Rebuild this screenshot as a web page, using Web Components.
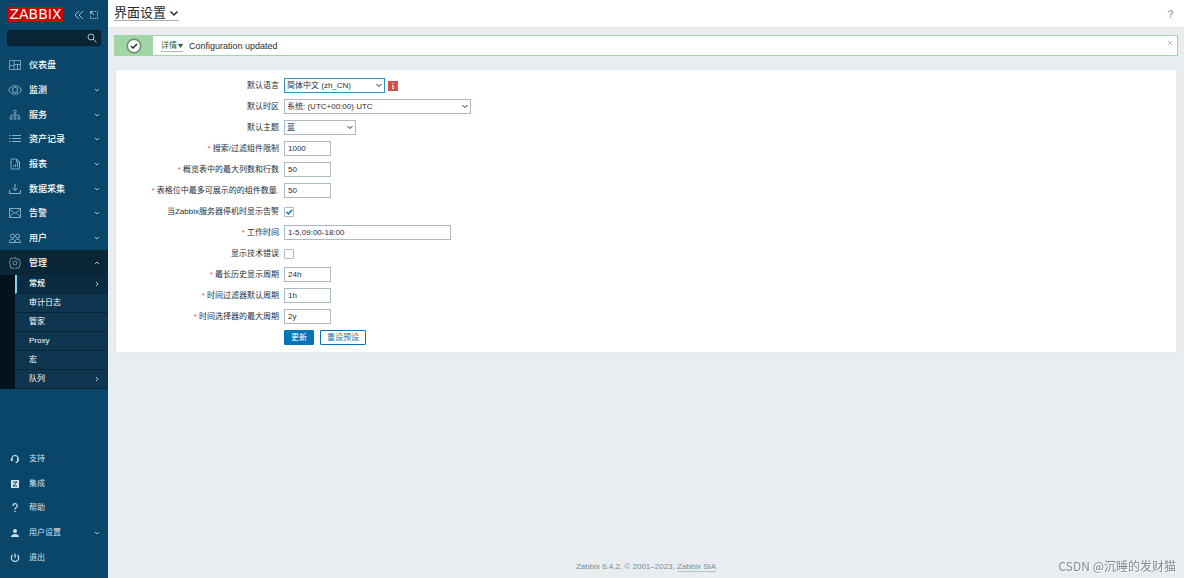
<!DOCTYPE html>
<html lang="zh-CN">
<head>
<meta charset="utf-8">
<title>界面设置</title>
<style>
  body { margin: 0; font: 8px/12px "Liberation Sans", "Noto Sans CJK SC", sans-serif; color: #1f2c33; background: #e9edf0; }
</style>
</head>
<body>
<zbx-app>
  <zbx-sidebar slot="side"></zbx-sidebar>
  <zbx-header slot="main" heading="界面设置"></zbx-header>
  <zbx-message slot="main">Configuration updated</zbx-message>
  <zbx-form slot="main">
    <zbx-select label="默认语言" value="简体中文 (zh_CN)" size="language" info active></zbx-select>
    <zbx-select label="默认时区" value="系统: (UTC+00:00) UTC" size="zone"></zbx-select>
    <zbx-select label="默认主题" value="蓝" size="theme"></zbx-select>
    <zbx-input label="搜索/过滤组件限制" value="1000" required></zbx-input>
    <zbx-input label="概览表中的最大列数和行数" value="50" required></zbx-input>
    <zbx-input label="表格位中最多可展示的的组件数量." value="50" required></zbx-input>
    <zbx-check label="当Zabbix服务器停机时显示告警" checked></zbx-check>
    <zbx-input label="工作时间" value="1-5,09:00-18:00" required wide></zbx-input>
    <zbx-check label="显示技术错误"></zbx-check>
    <zbx-input label="最长历史显示周期" value="24h" required></zbx-input>
    <zbx-input label="时间过滤器默认周期" value="1h" required></zbx-input>
    <zbx-input label="时间选择器的最大周期" value="2y" required></zbx-input>
    <zbx-actions></zbx-actions>
  </zbx-form>
  <zbx-footer slot="main"></zbx-footer>
</zbx-app>
<zbx-watermark>CSDN @沉睡的发财猫</zbx-watermark>

<script>
const svg = (body, w = 12, h = 12, box = `0 0 ${w} ${h}`) =>
  `<svg width="${w}" height="${h}" viewBox="${box}" fill="none" stroke="currentColor" aria-hidden="true">${body}</svg>`;

const define = (name, render) => customElements.define(name, class extends HTMLElement {
  connectedCallback() {
    if (this.shadowRoot) return;
    const t = document.createElement('template');
    t.innerHTML = '<style>:host,*{box-sizing:border-box}svg{display:block;flex:none}</style>' + render(this);
    this.attachShadow({ mode: 'open' }).append(t.content.cloneNode(true));
  }
});

const icons = {
  dashboard: svg('<path d="M.5 1.500h11v9H.5zM5 1.500v9M.5 6.500H5M5 5.500h6.500M8.500 5.500v5" stroke-width=".8"/>'),
  eye: svg('<path d="M.5 6C3.500.2 10.500.2 13.500 6 10.500 11.800 3.500 11.800.500 6z" stroke-width=".9"/><circle cx="7" cy="6" r="2.700" stroke-width=".9"/>', 14, 12),
  services: svg('<path d="M6 4v4M2 8V6h8v2" stroke-width=".8"/><circle cx="6" cy="2.500" r="1.300" stroke-width=".8"/><circle cx="2" cy="9.300" r="1.200" stroke-width=".8"/><circle cx="6" cy="9.300" r="1.200" stroke-width=".8"/><circle cx="10" cy="9.300" r="1.200" stroke-width=".8"/>'),
  list: svg('<path d="M3 2.500h9M3 5.500h9M3 8.500h9M0 2.500h1.500M0 5.500h1.500M0 8.500h1.500"/>'),
  report: svg('<path d="M2 1h5.500L10.500 4v7H2zM7.500 1v3h3M4.500 7.500V9M6.500 6V9M8.500 5V9" stroke-width=".9"/>'),
  download: svg('<path d="M6 1v6.500M3.500 5 6 7.500 8.500 5M.5 7v3.500h11V7"/>'),
  mail: svg('<path d="M.5 1.500h11v9H.5zM.5 2 6 6.500 11.500 2M.5 10l4-4M11.500 10l-4-4" stroke-width=".9"/>'),
  users: svg('<g stroke-width=".9"><circle cx="3.500" cy="4" r="2"/><circle cx="8.500" cy="4" r="2"/><path d="M.5 10.500v-1c0-3 5.500-3 5.500 0v1zM6 10.500v-1c0-3 5.500-3 5.500 0v1z"/></g>'),
  gear: svg('<path d="M5 .8h2l.4 1.300 1.100.5 1.300-.6 1.200 1.300-.6 1.300.4 1 .9.4v1.500l-1.200.6-.4 1 .5 1.200-1.300 1-1.200-.5-1 .4-.6 1H5l-.6-1.200-1-.4-1.300.5L1 9l.5-1.200-.4-1-.8-.5V4.800l1-.5.4-1L1.200 2l1.200-1 1.200.600 1-.4z" stroke-width=".8"/><circle cx="6" cy="6" r="2" stroke-width=".8"/>'),
  support: svg('<path d="M3 8V5.500a3 3 0 0 1 6 0V7q0 2.500-2.500 2.500" stroke-width="1.200"/><path d="M2.500 5.500V8M9 5.500V8" stroke-width="1.500"/>'),
  integrations: svg('<path fill="currentColor" stroke="none" d="M2 2h8v8H2z"/><path d="M4 4h4L4 8h4" stroke="#0a466a"/>'),
  help: svg('<path d="M4 4c0-3 4.200-3 4.200-.4C8.200 5.400 6 5.500 6 7.500M6 8.700V10" stroke-width="1.200"/>'),
  user: svg('<g fill="currentColor" stroke="none"><circle cx="6" cy="4" r="2"/><path d="M2 10c0-4 8-4 8 0z"/></g>'),
  power: svg('<path d="M6 1.500V6M3.500 3a3.700 3.700 0 1 0 5 0" stroke-width="1.200"/>')
};
const chevron = d => svg(`<path d="${{ down: 'M1 2l2 2 2-2', up: 'M1 4l2-2 2 2', right: 'M2 1l2 2-2 2' }[d]}"/>`, 6, 6);

define('zbx-app', () => `<style>
  :host{display:flex;min-height:100vh}
  main{flex:1;min-width:0;display:flex;flex-direction:column}
  </style><slot name="side"></slot><main><slot name="main"></slot></main>`);

define('zbx-nav-item', el => `<style>
  :host{display:block;font-size:9px;color:#fff;font-weight:500}
  :host([minor]){font-size:8px;color:#d5e2ea;font-weight:400}
  a{height:100%;display:flex;align-items:center;color:inherit;text-decoration:none;padding:0 8px 0 7px}
  :host([open]) a{background:#0a2536}
  i{width:15px;margin-right:7px;display:flex;justify-content:center;color:#8fb4ca}
  :host([minor]) i{color:#d5e2ea}
  span{flex:1}
  .c{color:#a9c4d4}
  </style><a href="#"><i>${icons[el.getAttribute('icon')]}</i><span><slot></slot></span>
  ${el.hasAttribute('arrow') ? `<div class="c">${chevron(el.getAttribute('arrow'))}</div>` : ''}</a>`);

define('zbx-sub-item', el => `<style>
  :host{display:block;height:19px}
  a{height:100%;display:flex;align-items:center;color:#fff;text-decoration:none;padding:0 8px 0 12px;background:#0e3650;border-bottom:1px solid #082437;border-left:2px solid #0e3650}
  :host([selected]) a{background:#0a2c42;border-left-color:#86d0f5;font-weight:500}
  span{flex:1}
  div{color:#a9c4d4}
  </style><a href="#"><span><slot></slot></span>${el.hasAttribute('arrow') ? `<div>${chevron('right')}</div>` : ''}</a>`);

define('zbx-sidebar', () => `<style>
  :host{width:108px;flex:none;background:#0a466a;display:flex;flex-direction:column;padding-bottom:8px}
  .top{display:flex;align-items:center;height:29px;padding-left:8px;color:#9dbdd0}
  .logo{background:#d40000;color:#fff;font:14px/15px "DejaVu Sans",sans-serif;width:55px;text-align:center;text-decoration:none;margin-right:11px}
  button{border:0;background:none;padding:0;color:inherit;margin-right:5px}
  .search{display:flex;align-items:center;height:16px;margin:1px 7px 7px;background:#082436;border:1px solid #082032;border-radius:2px;color:#a9c4d4}
  .search button{margin-right:3px}
  input{flex:1;min-width:0;border:0;background:none;color:#fff;font:inherit;padding:0 4px;height:12px;outline:0}
  .main{display:grid;grid-auto-rows:1fr;height:222px}
  .sub{background:#03131e;padding-left:15px}
  .foot{display:grid;grid-auto-rows:1fr;height:123px;margin-top:auto}
  </style>
  <div class="top"><a class="logo" href="#">ZABBIX</a>
    <button aria-label="折叠">${svg('<path d="M5 1 1 5l4 4M9 1 5 5l4 4"/>', 10, 10)}</button>
    <button aria-label="隐藏">${svg('<path d="M5.500 1.500h3v7h-7V5.500" stroke-width=".9" stroke-dasharray="1.500 .7"/><path d="M1.500 4.500v-3h3M1.500 1.500 5 5"/>', 10, 10)}</button></div>
  <div class="search"><input aria-label="搜索"><button aria-label="搜索">${svg('<circle cx="4" cy="4" r="3"/><path d="m6 6 3.500 3.500"/>', 10, 10)}</button></div>
  <nav class="main">
    <zbx-nav-item icon="dashboard">仪表盘</zbx-nav-item>
    <zbx-nav-item icon="eye" arrow="down">监测</zbx-nav-item>
    <zbx-nav-item icon="services" arrow="down">服务</zbx-nav-item>
    <zbx-nav-item icon="list" arrow="down">资产记录</zbx-nav-item>
    <zbx-nav-item icon="report" arrow="down">报表</zbx-nav-item>
    <zbx-nav-item icon="download" arrow="down">数据采集</zbx-nav-item>
    <zbx-nav-item icon="mail" arrow="down">告警</zbx-nav-item>
    <zbx-nav-item icon="users" arrow="down">用户</zbx-nav-item>
    <zbx-nav-item icon="gear" arrow="up" open>管理</zbx-nav-item>
  </nav>
  <nav class="sub">
    <zbx-sub-item selected arrow>常规</zbx-sub-item>
    <zbx-sub-item>审计日志</zbx-sub-item>
    <zbx-sub-item>管家</zbx-sub-item>
    <zbx-sub-item>Proxy</zbx-sub-item>
    <zbx-sub-item>宏</zbx-sub-item>
    <zbx-sub-item arrow>队列</zbx-sub-item>
  </nav>
  <nav class="foot">
    <zbx-nav-item minor icon="support">支持</zbx-nav-item>
    <zbx-nav-item minor icon="integrations">集成</zbx-nav-item>
    <zbx-nav-item minor icon="help">帮助</zbx-nav-item>
    <zbx-nav-item minor icon="user" arrow="down">用户设置</zbx-nav-item>
    <zbx-nav-item minor icon="power">退出</zbx-nav-item>
  </nav>`);

define('zbx-header', el => `<style>
  :host{display:flex;align-items:center;justify-content:space-between;height:28px;background:#fff;border-bottom:1px solid #dfe4e7;padding:0 10px 0 6px}
  h1{margin:0;font-size:13px;line-height:14px;font-weight:400}
  h1 button{display:flex;align-items:center;gap:3px;font:inherit;color:inherit;border:0;border-bottom:1px solid #a5abaf;background:none;padding:0}
  a{color:#a9b8c2;font-size:11px;font-weight:700;text-decoration:none}
  </style><h1><button>${el.getAttribute('heading')}${svg('<path d="M1.500 3.500 5 7l3.500-3.500" stroke-width="1.500"/>', 10, 10)}</button></h1><a href="#" aria-label="帮助">?</a>`);

define('zbx-message', () => `<style>
  :host{display:flex;align-items:center;height:21px;margin:7px 6px 0;background:#fff;border:1px solid #a3d6a6;font-size:9px}
  .ok{width:38px;align-self:stretch;background:#a3d6a6;display:flex;align-items:center;justify-content:center}
  .d{display:flex;align-items:center;gap:1px;font-size:8px;line-height:10px;color:#2e5d33;border:0;border-bottom:1px solid #a8b8a8;background:none;padding:1px 0 0;margin:0 6px 0 8px;font-family:inherit}
  .x{margin:0 4px 6px auto;border:0;background:none;padding:0;color:#b0bec6}
  </style><div class="ok">${svg('<circle cx="8" cy="8" r="6.700" fill="#fff" stroke="#6d8b70" stroke-width="1.500"/><path d="m5 8 2 2 4-4" stroke="#1f2c33" stroke-width="1.500"/>', 16, 16)}</div>
  <button class="d">详情${svg('<path d="M0 1h5L2.500 5z" fill="currentColor" stroke="none"/>', 5, 6)}</button><span><slot></slot></span>
  <button class="x" aria-label="关闭">${svg('<path d="m1 1 4 4M5 1 1 5"/>', 6, 6)}</button>`);

define('zbx-form', () => `<style>
  :host{display:block;margin:13px 7px 0;background:#fff;border:1px solid #e3e8eb}
  form{display:grid;gap:6px;padding:8px 0 7px}
  </style><form onsubmit="return false"><slot></slot></form>`);

const rowStyle = `
  :host{display:grid;grid-template-columns:163px 1fr;column-gap:5px;align-items:center;height:15px}
  label{text-align:right;white-space:nowrap;justify-self:end}
  label b{color:#e45959;font-weight:400}
  .f{display:flex;align-items:center;gap:3px}
  input,select{font:inherit;color:inherit;background:#fff;border:1px solid #acbbc2;border-radius:0;height:15px;margin:0;padding:0 3px;outline:0}`;
const label = el => `<label for="f">${el.hasAttribute('required') ? '<b>*</b> ' : ''}${el.getAttribute('label')}</label>`;

define('zbx-select', el => `<style>${rowStyle}
  .s{position:relative;width:101px}
  :host([size=zone]) .s{width:187px}
  :host([size=theme]) .s{width:72px}
  select{appearance:none;width:100%;padding:0 2px}
  :host([active]) select{border-color:#2f8fc6}
  .s svg{position:absolute;right:2px;top:4px;pointer-events:none}
  .i{width:10px;height:10px;padding:0;border:0;background:#d64e4e;color:#fff;display:flex;align-items:center;justify-content:center}
  </style>${label(el)}<div class="f"><div class="s"><select id="f"><option>${el.getAttribute('value')}</option></select>${svg('<path d="m1.500 2 2.500 2.500L6.500 2"/>', 8, 7)}</div>
  ${el.hasAttribute('info') ? `<button type="button" class="i" aria-label="信息">${svg('<path d="M4 1v1M3 3.500h1V6M3 6.500h2"/>', 8, 8)}</button>` : ''}</div>`);

define('zbx-input', el => `<style>${rowStyle}
  input{width:47px}
  :host([wide]) input{width:167px}
  </style>${label(el)}<div class="f"><input id="f" type="text" value="${el.getAttribute('value')}"></div>`);

define('zbx-check', el => `<style>${rowStyle}
  .f{position:relative}
  input{appearance:none;width:10px;height:10px;padding:0;border-radius:1px}
  svg{position:absolute;left:1px;top:1px;color:#0275b8;pointer-events:none}
  </style>${label(el)}<div class="f"><input id="f" type="checkbox" ${el.hasAttribute('checked') ? 'checked' : ''}>
  ${el.hasAttribute('checked') ? svg('<path d="m1.500 4 2 2 3.500-4" stroke-width="1.500"/>', 8, 8) : ''}</div>`);

define('zbx-actions', () => `<style>
  :host{display:flex;gap:6px;padding-left:168px}
  button{height:15px;font:inherit;line-height:12px;padding:0 6px;border:1px solid #0275b8;border-radius:1px;background:#fff;color:#0275b8}
  .p{background:#0275b8;color:#fff}
  </style><button class="p">更新</button><button type="button">重设预设</button>`);

define('zbx-footer', () => `<style>
  :host{display:block;margin-top:auto;padding-bottom:5px;text-align:center;color:#768d99}
  a{color:inherit;text-decoration:none;border-bottom:1px solid #b5c0c7}
  </style>Zabbix 6.4.2. © 2001–2023, <a href="#">Zabbix SIA</a>`);

define('zbx-watermark', () => `<style>
  :host{position:fixed;right:8px;bottom:3px;font:12px/18px "Noto Sans CJK SC",sans-serif;color:#85898c;text-shadow:1px 1px 0 #fff;pointer-events:none}
  </style><slot></slot>`);
</script>
</body>
</html>
